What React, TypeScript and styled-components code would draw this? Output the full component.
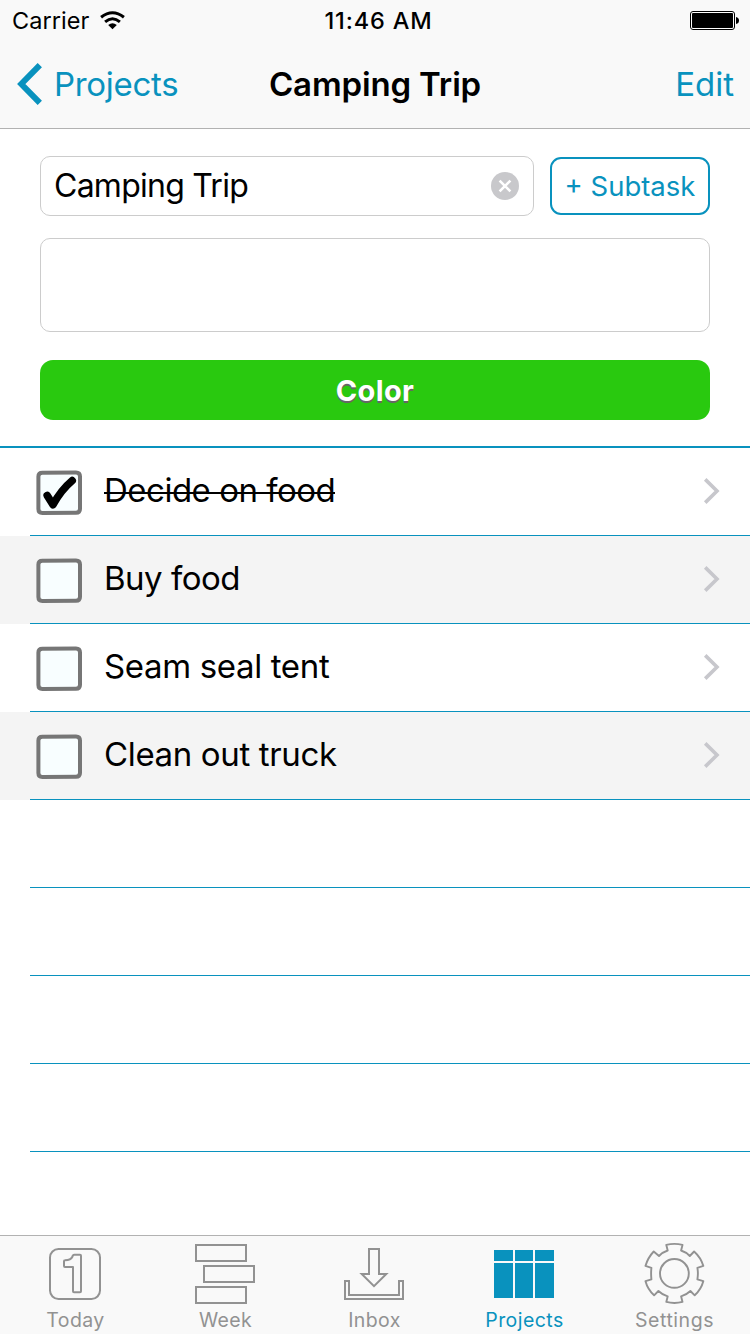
import React from "react";
import styled, { createGlobalStyle, css } from "styled-components";

const BLUE = "#0992be";
const GRAY = "#929292";

const GlobalStyle = createGlobalStyle`
  * { box-sizing: border-box; }
  body { margin: 0; background: #fff; font-family: Inter, "Liberation Sans", sans-serif; }
  button, input, textarea { font-family: inherit; margin: 0; }
`;

const Screen = styled.main`
  display: flex;
  flex-direction: column;
  width: 750px;
  height: 1334px;
  overflow: hidden;
  background: #fff;
  color: #000;
`;

const Header = styled.header`
  flex: none;
  height: 129px;
  background: #f9f9f9;
  border-bottom: 1px solid #b2b2b2;
`;

const StatusBar = styled.div`
  display: grid;
  grid-template-columns: 1fr auto 1fr;
  align-items: center;
  height: 40px;
  padding: 0 11px 0 12px;
  font-size: 23.5px;
  line-height: 38px;
`;

const Carrier = styled.div`
  display: flex;
  align-items: center;
  gap: 11px;
  padding-top: 2px;
  letter-spacing: 0.05px;
  svg { margin-bottom: 1px; }
`;

const Clock = styled.div`
  padding: 2px 0 0 6px;
  font-weight: 500;
  letter-spacing: 0.85px;
`;

const BatteryIcon = styled.svg`
  justify-self: end;
`;

const NavBar = styled.nav`
  display: grid;
  grid-template-columns: 1fr auto 1fr;
  align-items: center;
  height: 88px;
  padding: 0 16px;
`;

const NavButton = styled.button<{ $end?: boolean }>`
  display: flex;
  align-items: center;
  justify-self: ${(p) => (p.$end ? "end" : "start")};
  gap: 10px;
  padding: 0;
  border: 0;
  background: none;
  color: ${BLUE};
  font-size: 33px;
  line-height: 40px;
  letter-spacing: ${(p) => (p.$end ? 0 : -0.3)}px;
`;

const Title = styled.h1`
  margin: 0;
  font-size: 33px;
  font-weight: 600;
  line-height: 40px;
  letter-spacing: -0.15px;
`;

const Form = styled.section`
  flex: none;
  display: flex;
  flex-direction: column;
  height: 319px;
  padding: 27px 40px 0;
  border-bottom: 2px solid ${BLUE};
`;

const NameRow = styled.div`
  display: flex;
  align-items: center;
  gap: 16px;
`;

const NameField = styled.div`
  display: flex;
  align-items: center;
  flex: 1;
  height: 60px;
  padding: 0 14px 0 13px;
  border: 1px solid #ccc;
  border-radius: 10px;
`;

const NameText = styled.span`
  flex: 1;
  font-size: 32px;
  line-height: 56px;
  letter-spacing: -0.75px;
`;

const SubtaskButton = styled.button`
  width: 160px;
  height: 58px;
  padding: 0;
  border: 2px solid ${BLUE};
  border-radius: 11px;
  background: #fff;
  color: ${BLUE};
  font-size: 27.5px;
  letter-spacing: 0;
  white-space: nowrap;
`;

const Notes = styled.div`
  height: 94px;
  margin-top: 22px;
  border: 1px solid #ccc;
  border-radius: 10px;
`;

const ColorButton = styled.button`
  height: 60px;
  margin-top: 28px;
  padding: 0;
  border: 0;
  border-radius: 13px;
  background: #29c90f;
  color: #fff;
  font-size: 29px;
  font-weight: 700;
  letter-spacing: 0.35px;
  text-shadow: 0 2px 0 #666;
`;

const List = styled.ul`
  flex: 1;
  margin: 0;
  padding: 0;
  list-style: none;
`;

const Row = styled.li<{ $shaded?: boolean }>`
  height: 88px;
  padding-left: 30px;
  background: ${(p) => (p.$shaded ? "#f4f4f4" : "#fff")};
`;

const RowContent = styled.div`
  display: flex;
  align-items: center;
  height: 88px;
  padding: 0 30px 0 5px;
  border-bottom: 1px solid ${BLUE};
`;

const BoxIcon = styled.svg`
  margin-top: 1px;
`;

const Disclosure = styled.svg`
  margin-bottom: 1px;
`;

const TaskName = styled.span<{ $done?: boolean; $tracking: number }>`
  flex: 1;
  margin: 0 0 4px 21px;
  font-size: 33px;
  line-height: 44px;
  letter-spacing: ${(p) => p.$tracking}px;
  span {
    display: inline-block;
    vertical-align: top;
    ${(p) =>
      p.$done &&
      css`
        background: linear-gradient(#000, #000) 0 24px / 100% 2px no-repeat;
      `}
  }
`;

const TabBar = styled.footer`
  flex: none;
  display: grid;
  grid-template-columns: 150px 150px 148px 152px 148px;
  height: 99px;
  background: #f9f9f9;
  border-top: 1px solid #b2b2b2;
`;

const Tab = styled.div<{ $active?: boolean }>`
  display: flex;
  flex-direction: column;
  align-items: center;
  padding-top: 8px;
  color: ${(p) => (p.$active ? BLUE : GRAY)};
  svg { overflow: visible; }
`;

const TabLabel = styled.span<{ $tracking: number }>`
  margin-top: 4px;
  padding-left: 1px;
  font-size: 19.5px;
  line-height: 24px;
  letter-spacing: ${(p) => p.$tracking}px;
`;

const CheckBox = ({ checked }: { checked?: boolean }) => (
  <BoxIcon width="48" height="48" viewBox="0 0 48 48">
    <path
      d="M7.4 4.7 L41 4.4 Q45 4.4 45 8.4 V40.8 Q45 44.8 41 44.8 L7.4 45 Q3.4 45 3.4 41 V8.6 Q3.4 4.7 7.4 4.7Z"
      fill="#f8feff"
      stroke="#767676"
      strokeWidth="4"
    />
    {checked && (
      <path
        d="M12.2 27.4 L18 36.8 Q26 22 37.2 12.6"
        fill="none"
        stroke="#000"
        strokeWidth="7.6"
        strokeLinecap="round"
        strokeLinejoin="round"
      />
    )}
  </BoxIcon>
);

const TodayIcon = () => (
  <svg width="60" height="60" viewBox="0 0 60 60" fill="none" stroke="currentColor" strokeWidth="2">
    <rect x="5" y="5" width="50" height="50" rx="8.5" />
    <path
      d="M20 16.3 Q25.8 16 27.4 12.7 Q27.8 10.7 29.4 10.7 H35 Q36 10.7 36 11.7 V47.3 Q36 48.3 35 48.3 H29 Q28 48.3 28 47.3 V23 H20 Q19 23 19 22 V17.3 Q19 16.3 20 16.3Z"
      strokeLinejoin="round"
    />
  </svg>
);

const WeekIcon = () => (
  <svg width="60" height="60" viewBox="0 0 60 60" fill="none" stroke="currentColor" strokeWidth="2">
    <rect x="1" y="1" width="50" height="16" />
    <rect x="9" y="22" width="50" height="16" />
    <rect x="1" y="43" width="50" height="16" />
  </svg>
);

const InboxIcon = () => (
  <svg width="60" height="60" viewBox="0 0 60 60" fill="none" stroke="currentColor" strokeWidth="2">
    <path d="M1 37 H5 V51 H55 V37 H59 V55 H1Z" />
    <path d="M25 5 H35 V30 H42.3 L30 42.2 L17.7 30 H25Z" />
  </svg>
);

const ProjectsIcon = () => (
  <svg width="60" height="60" viewBox="0 0 60 60" fill="currentColor">
    <path d="M0 6h19v11H0z M21 6h18v11H21z M41 6h19v11H41z M0 19h19v35H0z M21 19h18v35H21z M41 19h19v35H41z" />
  </svg>
);

const SettingsIcon = () => (
  <svg width="60" height="60" viewBox="0 0 60 60" fill="none" stroke="currentColor" strokeWidth="1.9" strokeLinejoin="round">
    <circle cx="30.4" cy="29.4" r="14.4" />
    <path d="M22.3 0.9 Q30.4 -1.2 38.5 0.9 L37.1 6.5 Q41.9 8 45.8 12 L50.1 7.5 Q56.8 13.5 59.3 21.8 L53.4 23.8 Q54.4 29.5 53.4 35.4 L59.3 37.2 Q57.2 45.2 50.7 51.3 L46.4 47 Q42.2 51 37.1 52.3 L38.5 57.9 Q30.4 60 22.3 57.9 L23.7 52.3 Q18.6 51 14.4 47 L10.1 51.3 Q3.6 45.2 1.5 37.2 L7.4 35.4 Q6.8 29.5 7.4 23.8 L1.5 21.8 Q4 13.5 9.7 7.5 L15 12 Q18.9 8 23.7 6.5Z" />
  </svg>
);

const WifiIcon = () => (
  <svg width="25" height="19" viewBox="0 0 25 19" fill="none" stroke="#000" strokeWidth="3">
    <path d="M1.1 6.3 Q12.5 -2.7 23.9 6.3" />
    <path d="M5.1 10.8 Q12.5 4.6 19.9 10.8" />
    <path d="M8.2 13.9 Q12.5 10.5 16.8 13.9 L12.5 18.2Z" fill="#000" stroke="none" />
  </svg>
);

const tasks = [
  { name: "Decide on food", done: true, tracking: -0.5 },
  { name: "Buy food", tracking: -0.5 },
  { name: "Seam seal tent", tracking: -0.35 },
  { name: "Clean out truck", tracking: -0.35 },
];

const tabs = [
  { label: "Today", Icon: TodayIcon, tracking: 0.4 },
  { label: "Week", Icon: WeekIcon, tracking: 0.3 },
  { label: "Inbox", Icon: InboxIcon, tracking: 0.4 },
  { label: "Projects", Icon: ProjectsIcon, active: true, tracking: 0.45 },
  { label: "Settings", Icon: SettingsIcon, tracking: 0.55 },
];

export default function App() {
  return (
    <Screen>
      <GlobalStyle />
      <Header>
        <StatusBar>
          <Carrier>
            Carrier
            <WifiIcon />
          </Carrier>
          <Clock>11:46 AM</Clock>
          <BatteryIcon width="49" height="20" viewBox="0 0 49 20">
            <rect x="0.5" y="1.5" width="44" height="18" rx="2.5" fill="#fff" stroke="#000" />
            <rect x="2" y="3" width="41" height="15" rx="1" />
            <path d="M46 7 Q49 7.5 49 10.5 Q49 13.5 46 14Z" />
          </BatteryIcon>
        </StatusBar>
        <NavBar>
          <NavButton>
            <svg width="28" height="44" viewBox="0 0 28 44" fill="none" stroke={BLUE} strokeWidth="6">
              <path d="M23.8 3.2 L5.3 22 L23.8 40.8" />
            </svg>
            Projects
          </NavButton>
          <Title>Camping Trip</Title>
          <NavButton $end>Edit</NavButton>
        </NavBar>
      </Header>
      <Form>
        <NameRow>
          <NameField>
            <NameText>Camping Trip</NameText>
            <svg width="28" height="28" viewBox="0 0 28 28">
              <circle cx="14" cy="14" r="14" fill="#c8c8cb" />
              <path d="M8.6 8.6 L19.4 19.4 M19.4 8.6 L8.6 19.4" stroke="#fff" strokeWidth="2.6" />
            </svg>
          </NameField>
          <SubtaskButton>+ Subtask</SubtaskButton>
        </NameRow>
        <Notes />
        <ColorButton>Color</ColorButton>
      </Form>
      <List>
        {tasks.map((task, i) => (
          <Row key={task.name} $shaded={i % 2 === 1}>
            <RowContent>
              <CheckBox checked={task.done} />
              <TaskName $done={task.done} $tracking={task.tracking}>
                <span>{task.name}</span>
              </TaskName>
              <Disclosure width="17" height="26" viewBox="0 0 17 26" fill="none" stroke="#c7c7cc" strokeWidth="3.6">
                <path d="M2.2 1.4 L14 13 L2.2 24.6" />
              </Disclosure>
            </RowContent>
          </Row>
        ))}
        {[0, 1, 2, 3].map((n) => (
          <Row key={n}>
            <RowContent />
          </Row>
        ))}
      </List>
      <TabBar>
        {tabs.map(({ label, Icon, active, tracking }) => (
          <Tab key={label} $active={active}>
            <Icon />
            <TabLabel $tracking={tracking}>{label}</TabLabel>
          </Tab>
        ))}
      </TabBar>
    </Screen>
  );
}
